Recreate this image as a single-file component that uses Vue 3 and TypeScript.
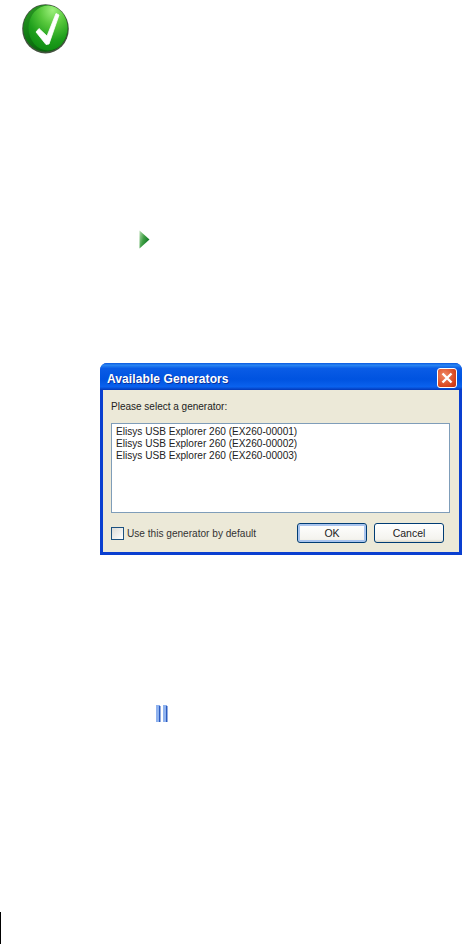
<script setup lang="ts">
const generators: string[] = [
  'Elisys USB Explorer 260 (EX260-00001)',
  'Elisys USB Explorer 260 (EX260-00002)',
  'Elisys USB Explorer 260 (EX260-00003)',
]
</script>

<template>
  <div class="page">
    <svg class="check" width="48" height="50" viewBox="0 0 48 50">
      <defs>
        <radialGradient id="ball" cx="0.62" cy="0.1" r="0.95">
          <stop offset="0" stop-color="#9cf07c" />
          <stop offset="0.35" stop-color="#58c83c" />
          <stop offset="0.7" stop-color="#1f9f1c" />
          <stop offset="1" stop-color="#0d8a10" />
        </radialGradient>
        <linearGradient id="rim" x1="0" y1="0" x2="0.5" y2="1">
          <stop offset="0" stop-color="#2f9a26" />
          <stop offset="0.6" stop-color="#0f7a12" />
          <stop offset="1" stop-color="#0a620c" />
        </linearGradient>
      </defs>
      <ellipse cx="23.5" cy="24.8" rx="23.3" ry="24.6" fill="#43533f" />
      <ellipse cx="23.5" cy="24.3" rx="22.2" ry="23.4" fill="url(#rim)" />
      <ellipse cx="26" cy="24" rx="19.5" ry="22.5" fill="url(#ball)" />
      <path d="M17 24.5 L14 28 L24 40.5 L27 40 L37 11 L34 9.5 L25 32 Z" fill="#fff" stroke="#fff" stroke-width="0.8" stroke-linejoin="round" />
    </svg>

    <svg class="play" width="11" height="19" viewBox="0 0 11 19">
      <defs>
        <linearGradient id="pl" x1="0" y1="0" x2="1" y2="0.5">
          <stop offset="0" stop-color="#b5dcb0" />
          <stop offset="0.5" stop-color="#3f9f44" />
          <stop offset="1" stop-color="#0f7526" />
        </linearGradient>
      </defs>
      <path d="M0.5 0.5 L10.5 9.5 L0.5 18.5 Z" fill="url(#pl)" />
    </svg>

    <section class="dialog">
      <header class="titlebar">
        <span class="title">Available Generators</span>
        <span class="close">
          <svg width="14" height="14" viewBox="0 0 14 14">
            <path d="M2.5 2.5 L11.5 11.5 M11.5 2.5 L2.5 11.5" stroke="#fff" stroke-width="2.4" />
          </svg>
        </span>
      </header>
      <div class="body">
        <p class="prompt">Please select a generator:</p>
        <ul class="list">
          <li v-for="g in generators" :key="g">{{ g }}</li>
        </ul>
        <div class="footer">
          <label class="default">
            <span class="box"></span>
            <span>Use this generator by default</span>
          </label>
          <div class="buttons">
            <button class="btn primary" type="button">OK</button>
            <button class="btn" type="button">Cancel</button>
          </div>
        </div>
      </div>
    </section>

    <svg class="pause" width="13" height="17" viewBox="0 0 13 17">
      <rect x="1" y="0" width="4" height="17" fill="#8fb2ee" />
      <rect x="4" y="1" width="1.5" height="16" fill="#2c5cc0" />
      <rect x="8" y="0" width="4" height="17" fill="#8fb2ee" />
      <rect x="11" y="1" width="1.5" height="16" fill="#2c5cc0" />
    </svg>

    <div class="edge"></div>
  </div>
</template>

<style>
html, body { margin: 0; background: #fff; }
</style>

<style scoped>
.page {
  position: relative;
  height: 944px;
  overflow: hidden;
  background: #fff;
  font-family: "Liberation Sans", Arial, sans-serif;
  display: flex;
  flex-direction: column;
  align-items: flex-start;
}
.check { margin: 4px 0 0 22px; display: block; }
.play { margin: 176px 0 0 139px; display: block; }
.dialog {
  margin: 114px 0 0 100px;
  width: 362px;
  height: 192px;
  box-sizing: border-box;
  display: flex;
  flex-direction: column;
  border-radius: 7px 7px 0 0;
  background: #0a3fd0;
  padding: 0 3px 3px;
}
.titlebar {
  height: 27px;
  flex: none;
  box-sizing: border-box;
  margin: 0 -3px;
  padding: 2px 5px 0 7px;
  display: flex;
  align-items: center;
  justify-content: space-between;
  border-radius: 7px 7px 0 0;
  background: linear-gradient(#0a58e0 0, #2a86f2 8%, #0a5ce6 20%, #0053e0 60%, #0a62ee 88%, #0338b8 100%);
}
.title {
  margin-top: 3px;
  color: #fff;
  font-weight: 700;
  font-size: 12px;
  letter-spacing: 0.1px;
  text-shadow: 1px 1px 0 #0a2f9c;
}
.close {
  width: 20px;
  height: 20px;
  box-sizing: border-box;
  border: 1px solid #fff;
  border-radius: 3px;
  background: radial-gradient(circle at 35% 35%, #f08a66, #d8441c 70%, #c03010);
  display: flex;
  align-items: center;
  justify-content: center;
}
.body {
  flex: 1;
  background: #ece9d8;
  padding: 10px 9px 0 8px;
  display: flex;
  flex-direction: column;
  min-height: 0;
}
.prompt {
  margin: 0;
  font-size: 10px;
  line-height: 13px;
  color: #222;
}
.list {
  list-style: none;
  margin: 10px 0 0;
  padding: 2px 4px 0;
  height: 90px;
  flex: none;
  box-sizing: border-box;
  background: #fff;
  border: 1px solid #7f9db9;
  font-size: 10.1px;
  line-height: 12px;
  color: #222;
}
.footer {
  margin-top: 10px;
  padding-right: 6px;
  display: flex;
  justify-content: space-between;
  align-items: center;
}
.default {
  display: flex;
  align-items: center;
  gap: 3px;
  font-size: 10.1px;
  color: #333;
}
.box {
  width: 13px;
  height: 13px;
  box-sizing: border-box;
  border: 1px solid #1c5180;
  background: linear-gradient(135deg, #dcdcd7, #fff);
}
.buttons { display: flex; gap: 7px; }
.btn {
  width: 70px;
  height: 20px;
  padding: 0;
  box-sizing: border-box;
  border: 1px solid #003c74;
  border-radius: 3px;
  background: linear-gradient(#fff, #f4f3ee 85%, #dcd8c8);
  font-family: inherit;
  font-size: 10.5px;
  color: #222;
}
.primary { box-shadow: inset 0 0 0 2px #a9c4ee; }
.pause { margin: 150px 0 0 155px; display: block; }
.edge {
  position: absolute;
  left: 0;
  top: 912px;
  width: 1px;
  height: 32px;
  background: #000;
}
</style>
